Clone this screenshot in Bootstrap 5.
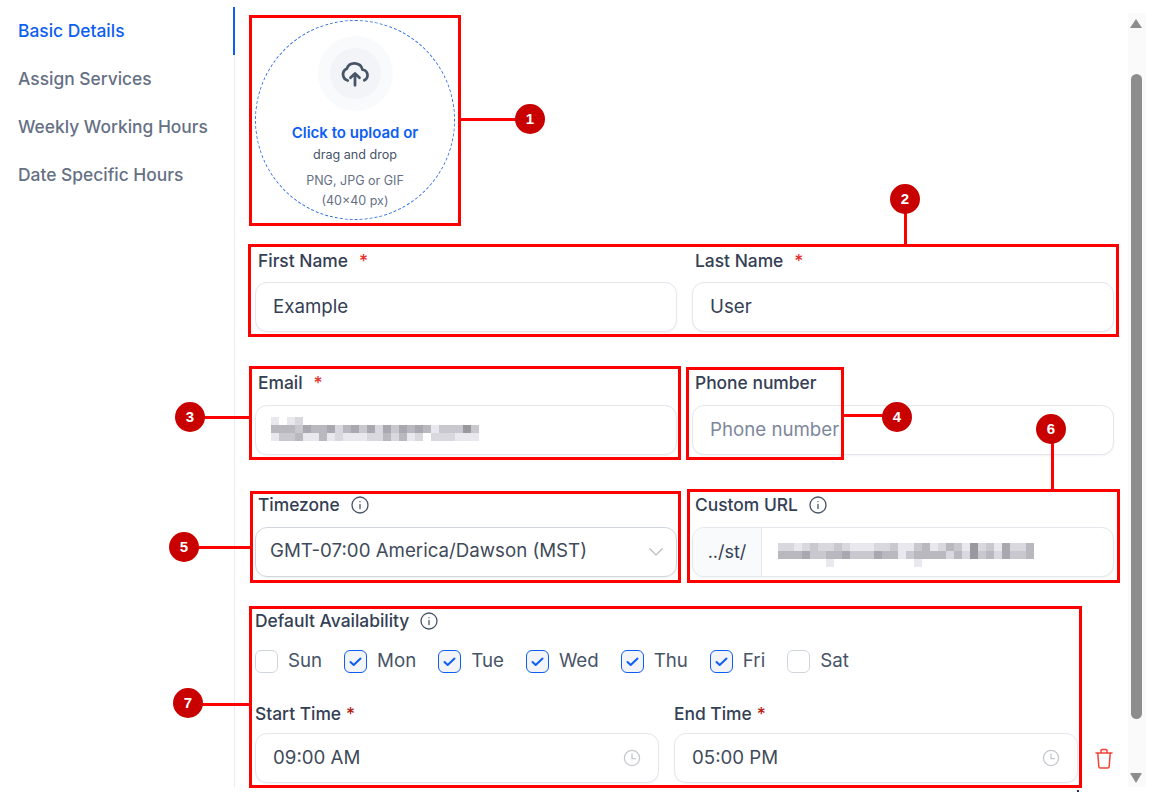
<!DOCTYPE html>
<html lang="en">
  <head>
    <meta charset="UTF-8" />
    <meta name="viewport" content="width=device-width, initial-scale=1.0" />
    <title>Basic Details</title>
    <link
      href="https://cdn.jsdelivr.net/npm/bootstrap@5.3.0/dist/css/bootstrap.min.css"
      rel="stylesheet"
    />
    <style>
      html, body { height: 792px; overflow: hidden; }
      body { font-family: Inter, "Liberation Sans", sans-serif; background: #fff; color: #344054; }
      .app-shell { height: 787px; position: relative; }

      /* left tabs */
      .side-tabs { width: 235px; flex: none; margin-top: 7px; border-right: 1px solid #eaecf0; }
      .side-tab { display: block; height: 48px; line-height: 48px; padding-left: 18px; font-size: 17.4px; font-weight: 500; color: #667085; text-decoration: none; margin-right: -1px; border-right: 2px solid transparent; white-space: nowrap; }
      .side-tab.is-on { color: #0d5ef4; border-right-color: #0d5ef4; }

      /* form column */
      .form-col { width: 893px; flex: none; padding: 20px 14px 0 20px; }
      .upload-ring { width: 200px; height: 200px; border: 1px dashed #2f6fe4; border-radius: 50%; padding-top: 15px; text-align: center; }
      .cloud-halo { width: 75px; height: 75px; border-radius: 50%; background: #f9fafb; margin: 0 auto; }
      .cloud-core { width: 51px; height: 51px; border-radius: 50%; background: #f2f4f7; }
      .up-main { font-size: 15px; font-weight: 600; color: #0d5ef4; line-height: 20px; margin-top: 12px; }
      .up-sub { font-size: 12.6px; color: #475467; line-height: 18px; margin-top: 3px; }
      .up-hint { font-size: 12.5px; color: #667085; line-height: 20px; margin-top: 7px; }

      .field-label { font-size: 17.4px; font-weight: 500; color: #344054; line-height: 22px; margin-bottom: 10px; display: flex; align-items: center; white-space: pre; }
      .label-in { padding-left: 3px; }
      .req-mark { color: #e5322d; margin-left: 11px; }
      .req-near { color: #b42318; margin-left: 5px; }
      .info-ico { margin-left: 11px; }
      .soft-input { height: 50px; border: 1px solid #e4e7ec; border-radius: 12px; font-size: 18.7px; color: #344054; padding: 0 17px 2px; box-shadow: 0 1px 2px rgba(16, 24, 40, .05); }
      .soft-input::placeholder { color: #7d879c; opacity: 1; }
      .soft-box { height: 50px; border: 1px solid #e4e7ec; border-radius: 12px; font-size: 18.7px; color: #3f4a5a; padding: 0 17px; box-shadow: 0 1px 2px rgba(16, 24, 40, .05); display: flex; align-items: center; justify-content: space-between; background: #fff; }
      .tz-box { border-color: #d0d5dd; padding: 0 12px 2px 14px; }
      .mail-box { padding: 0 15px; }
      .url-box { padding: 0; overflow: hidden; }
      .url-pre { width: 69px; height: 100%; flex: none; background: #f9fafb; border-right: 1px solid #e4e7ec; padding-bottom: 2px; display: flex; align-items: center; justify-content: center; font-size: 18px; color: #344054; }
      .mosaic { display: block; }
      .mail-box .mosaic { margin-bottom: 2px; }
      .url-box .mosaic { margin-top: 15px; }
      .pair-gap { gap: 15px; }
      .pair-gap > div { width: 422px; flex: none; }
      .mail-row .field-label { margin-bottom: 11px; }

      .day-item { display: flex; align-items: center; font-size: 18.7px; color: #475467; line-height: 24px; }
      .day-box { width: 23px; height: 23px; border: 1px solid #d0d5dd; border-radius: 6px; margin-right: 10px; flex: none; background: #fff; }
      .day-box.is-on { border-color: #0d5ef4; background: #f2f4f7; }
      .day-box svg { display: block; }
      .time-pair { gap: 15px; }
      .time-pair > div { width: 404px; flex: none; }
      .time-pair .field-label { margin-bottom: 8px; }
      .trash-btn { margin-left: 16px; margin-bottom: 13px; }

      /* right scrollbar rail */
      .rail { width: 18px; flex: none; margin-top: 13px; background: #fafafa; position: relative; }
      .rail-thumb { position: absolute; left: 3px; top: 61px; width: 11px; height: 645px; background: #8d8d8d; border-radius: 6px; }
      .rail-up, .rail-down { position: absolute; left: 2px; width: 0; height: 0; border-left: 6.5px solid transparent; border-right: 6.5px solid transparent; }
      .rail-up { top: 6px; border-bottom: 9px solid #8d8d8d; }
      .rail-down { bottom: 4px; border-top: 10px solid #8d8d8d; }

      /* red annotations drawn on top of the screenshot */
      .note-box { position: absolute; border: 3px solid #ff0000; pointer-events: none; }
      .note-line { position: absolute; background: #ff0000; }
      .note-dot { position: absolute; width: 30px; height: 30px; border-radius: 50%; background: #c80000; color: #fff; font-size: 15px; font-family: "Liberation Sans", sans-serif; font-weight: 700; text-align: center; line-height: 30px; }
      .nb1 { left: 249px; top: 15px; width: 212px; height: 211px; }
      .nb2 { left: 248px; top: 244px; width: 871px; height: 93px; }
      .nb3 { left: 249px; top: 366px; width: 432px; height: 94px; }
      .nb4 { left: 686px; top: 367px; width: 158px; height: 93px; }
      .nb5 { left: 250px; top: 491px; width: 431px; height: 92px; }
      .nb6 { left: 687px; top: 489px; width: 433px; height: 94px; }
      .nb7 { left: 249px; top: 606px; width: 833px; height: 182px; }
      .nl1 { left: 461px; top: 118px; width: 56px; height: 3px; }
      .nl2 { left: 904px; top: 212px; width: 3px; height: 33px; }
      .nl3 { left: 203px; top: 416px; width: 47px; height: 3px; }
      .nl4 { left: 844px; top: 414px; width: 40px; height: 3px; }
      .nl5 { left: 197px; top: 546px; width: 54px; height: 3px; }
      .nl6 { left: 1051px; top: 441px; width: 3px; height: 49px; }
      .nl7 { left: 201px; top: 703px; width: 49px; height: 3px; }
      .nd1 { left: 515px; top: 104px; }
      .nd2 { left: 890px; top: 184px; }
      .nd3 { left: 175px; top: 402px; }
      .nd4 { left: 882px; top: 402px; }
      .nd5 { left: 169px; top: 532px; }
      .nd6 { left: 1036px; top: 414px; }
      .nd7 { left: 173px; top: 688px; }
      .note-speck { position: absolute; left: 1077px; top: 790px; width: 2px; height: 2px; background: #26325a; }
    </style>
  </head>
  <body>
    <div class="app-shell d-flex">
      <!-- Tabs -->
      <nav class="side-tabs">
        <a href="#" class="side-tab is-on">Basic Details</a>
        <a href="#" class="side-tab">Assign Services</a>
        <a href="#" class="side-tab">Weekly Working Hours</a>
        <a href="#" class="side-tab">Date Specific Hours</a>
      </nav>

      <!-- Form -->
      <main class="form-col">
        <div class="upload-ring">
          <div class="cloud-halo d-flex align-items-center justify-content-center">
            <div class="cloud-core d-flex align-items-center justify-content-center">
              <svg width="30" height="30" viewBox="0 0 24 24" fill="none" stroke="#475467" stroke-width="2.2" stroke-linecap="round" stroke-linejoin="round">
                <path d="M6.2 17.2A5 5 0 0 1 5.4 7.8 6.6 6.6 0 0 1 18 8.6a4.4 4.4 0 0 1 1.4 8.4" />
                <path d="M12 21v-9.2M8.4 15 12 11.5l3.6 3.5" />
              </svg>
            </div>
          </div>
          <div class="up-main">Click to upload or</div>
          <div class="up-sub">drag and drop</div>
          <div class="up-hint">PNG, JPG or GIF<br />(40×40 px)</div>
        </div>

        <div class="d-flex pair-gap" style="margin-top: 30px">
          <div>
            <label class="field-label label-in">First Name<span class="req-mark">*</span></label>
            <input class="form-control soft-input" value="Example" />
          </div>
          <div>
            <label class="field-label label-in">Last Name<span class="req-mark">*</span></label>
            <input class="form-control soft-input" value="User" />
          </div>
        </div>

        <div class="d-flex pair-gap mail-row" style="margin-top: 40px">
          <div>
            <label class="field-label label-in">Email<span class="req-mark">*</span></label>
            <div class="soft-box mail-box"><svg class="mosaic" data-row="email" width="208" height="24"></svg></div>
          </div>
          <div>
            <label class="field-label label-in">Phone number</label>
            <input class="form-control soft-input" placeholder="Phone number" />
          </div>
        </div>

        <div class="d-flex pair-gap" style="margin-top: 39px">
          <div>
            <label class="field-label label-in" style="margin-bottom: 11px">Timezone<svg class="info-ico" width="18" height="18" viewBox="0 0 18 18" fill="none" stroke="#475467" stroke-width="1.3" stroke-linecap="round"><circle cx="9" cy="9" r="8" /><path d="M9 8.5v4M9 5.6v.1" /></svg></label>
            <div class="soft-box tz-box">
              <span>GMT-07:00 America/Dawson (MST)</span>
              <svg width="16" height="16" viewBox="0 0 16 16" fill="none" stroke="#b3b8c2" stroke-width="1.2"><path d="M1.5 5.5l6.5 6.5 6.5-6.5" /></svg>
            </div>
          </div>
          <div>
            <label class="field-label label-in" style="margin-bottom: 11px">Custom URL<svg class="info-ico" width="18" height="18" viewBox="0 0 18 18" fill="none" stroke="#475467" stroke-width="1.3" stroke-linecap="round"><circle cx="9" cy="9" r="8" /><path d="M9 8.5v4M9 5.6v.1" /></svg></label>
            <div class="soft-box url-box">
              <div class="url-pre">../st/</div>
              <div class="flex-grow-1 align-self-start ps-3"><svg class="mosaic" data-row="url" width="256" height="24"></svg></div>
            </div>
          </div>
        </div>

        <div class="d-flex" style="margin-top: 33px">
          <div>
            <label class="field-label" style="margin-bottom: 17px">Default Availability<svg class="info-ico" width="18" height="18" viewBox="0 0 18 18" fill="none" stroke="#475467" stroke-width="1.3" stroke-linecap="round"><circle cx="9" cy="9" r="8" /><path d="M9 8.5v4M9 5.6v.1" /></svg></label>
            <div class="d-flex" id="day-row" style="gap: 22px; margin-bottom: 30px"></div>
            <div class="d-flex time-pair">
              <div>
                <label class="field-label">Start Time<span class="req-near">*</span></label>
                <div class="soft-box">
                  <span>09:00 AM</span>
                  <svg width="18" height="18" viewBox="0 0 18 18" fill="none" stroke="#c4c7cc" stroke-width="1.3"><circle cx="9" cy="9" r="7.6" /><path d="M9 4.6V9.6h4" /></svg>
                </div>
              </div>
              <div>
                <label class="field-label">End Time<span class="req-near">*</span></label>
                <div class="soft-box">
                  <span>05:00 PM</span>
                  <svg width="18" height="18" viewBox="0 0 18 18" fill="none" stroke="#c4c7cc" stroke-width="1.3"><circle cx="9" cy="9" r="7.6" /><path d="M9 4.6V9.6h4" /></svg>
                </div>
              </div>
            </div>
          </div>
          <div class="trash-btn align-self-end">
            <svg width="20" height="22" viewBox="0 0 20 22" fill="none" stroke="#f04438" stroke-width="1.5" stroke-linecap="round" stroke-linejoin="round"><path d="M2 5h16M7 5V2.6A1 1 0 0 1 8 1.6h4a1 1 0 0 1 1 1V5M3.8 5l1 13.6A1.6 1.6 0 0 0 6.4 20h7.2a1.6 1.6 0 0 0 1.6-1.4L16.2 5" /></svg>
          </div>
        </div>
      </main>

      <!-- Scrollbar -->
      <div class="rail">
        <div class="rail-up"></div>
        <div class="rail-thumb"></div>
        <div class="rail-down"></div>
      </div>

      <!-- Annotations -->
      <div class="note-box nb1"></div><div class="note-box nb2"></div><div class="note-box nb3"></div><div class="note-box nb4"></div><div class="note-box nb5"></div><div class="note-box nb6"></div><div class="note-box nb7"></div>
      <div class="note-line nl1"></div><div class="note-line nl2"></div><div class="note-line nl3"></div><div class="note-line nl4"></div><div class="note-line nl5"></div><div class="note-line nl6"></div><div class="note-line nl7"></div>
      <div class="note-dot nd1">1</div><div class="note-dot nd2">2</div><div class="note-dot nd3">3</div><div class="note-dot nd4">4</div><div class="note-dot nd5">5</div><div class="note-dot nd6">6</div><div class="note-dot nd7">7</div>
      <div class="note-speck"></div>
    </div>

    <script src="https://cdn.jsdelivr.net/npm/bootstrap@5.3.0/dist/js/bootstrap.bundle.min.js"></script>
    <script>
      // Weekday checkboxes
      const days = [["Sun", false], ["Mon", true], ["Tue", true], ["Wed", true], ["Thu", true], ["Fri", true], ["Sat", false]];
      const check = '<svg width="21" height="21" viewBox="0 0 21 21" fill="none" stroke="#0d5ef4" stroke-width="2" stroke-linecap="round" stroke-linejoin="round"><path d="M5.5 11l3.2 3 6.8-6.4"/></svg>';
      document.getElementById("day-row").innerHTML = days
        .map(([name, on]) => `<div class="day-item"><span class="day-box ${on ? "is-on" : ""}">${on ? check : ""}</span>${name}</div>`)
        .join("");

      // Pixelated (redacted) values: one hex digit of grey per 8px cell, f = blank
      const mosaics = {
        email: ["efedffffffffffffffffffffff", "bbbcabbadbacadacababeccc9c", "eccbeebedeeeddbdbedfdddeee"],
        url: ["ddedcddcdeeeddceecbedbce9dceaddb", "bbbaccbbacccabbecbbbbdbd9cbdaccb", "ffffffeffffffffffeffffffffffffff"],
      };
      document.querySelectorAll(".mosaic").forEach((svg) => {
        let rects = "";
        mosaics[svg.dataset.row].forEach((row, y) => {
          [...row].forEach((v, x) => {
            if (v === "f") return;
            const g = parseInt(v, 16) * 16 + 8;
            rects += `<rect x="${x * 8}" y="${y * 8}" width="8" height="8" fill="rgb(${g},${g},${g + 6})"/>`;
          });
        });
        svg.innerHTML = rects;
      });
    </script>
  </body>
</html>
